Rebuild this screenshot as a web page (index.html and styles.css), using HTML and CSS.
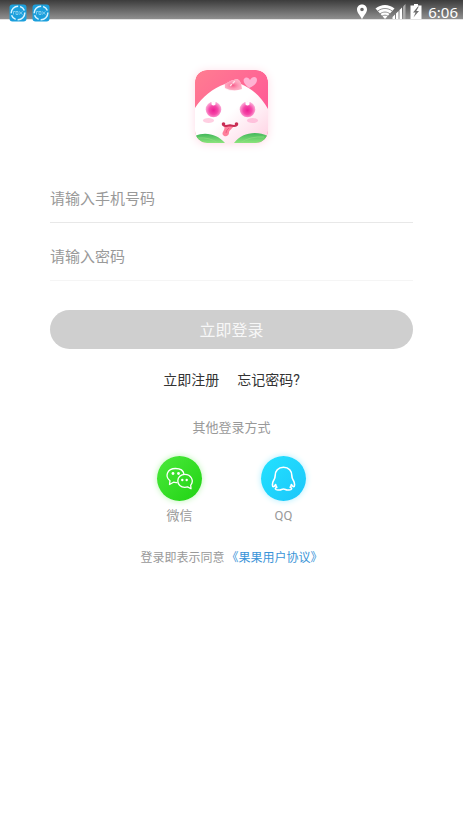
FILE: index.html
```html
<!DOCTYPE html>
<html lang="zh-CN">
<head>
    <meta charset="utf-8">
    <title>登录</title>
    <meta name="viewport" content="width=device-width, initial-scale=1">
    <link rel="stylesheet" href="styles.css">
</head>
<body>
    <div class="status-bar">
        <div class="status-left">
            <svg class="notice-icon" viewBox="0 0 18 18">
                <rect x="0.5" y="0.5" width="17" height="17" rx="3" fill="#1b9fdc"/>
                <circle cx="9" cy="9" r="6.8" fill="none" stroke="#d8f3ff" stroke-width="1.5" stroke-dasharray="11 2 6 2"/>
                <path d="M4.5 10.5v-3h2M7 7.500h2v3h-2zM10 7.500l3.500 3M13.500 7.500l-3.500 3" fill="none" stroke="#a5dcf5" stroke-width="0.700"/>
            </svg>
            <svg class="notice-icon" viewBox="0 0 18 18">
                <rect x="0.5" y="0.5" width="17" height="17" rx="3" fill="#1b9fdc"/>
                <circle cx="9" cy="9" r="6.8" fill="none" stroke="#d8f3ff" stroke-width="1.5" stroke-dasharray="11 2 6 2"/>
                <path d="M4.5 10.5v-3h2M7 7.500h2v3h-2zM10 7.500l3.500 3M13.500 7.500l-3.500 3" fill="none" stroke="#a5dcf5" stroke-width="0.700"/>
            </svg>
        </div>
        <div class="status-right">
            <!-- location, wifi, signal, battery -->
            <svg class="status-icons" viewBox="0 0 68 20">
                <path fill="#fff" fill-rule="evenodd" d="M7 4.500c-3 0-5 2.200-5 5 0 3.500 3.500 6 5 10 1.500-4 5-6.500 5-10 0-2.800-2-5-5-5zm0 3.200a1.800 1.800 0 1 1 0 3.600 1.800 1.800 0 0 1 0-3.600z"/>
                <path fill="#fff" d="M30 19L20.500 8.500c5.500-4.700 13.500-4.700 19 0z"/>
                <path fill="none" stroke="#777" stroke-width="0.800" d="M22.500 11.200c4.500-3.600 10.500-3.600 15 0M25 13.800c3-2.300 7-2.300 10 0M27 16.200c2-1.400 4-1.400 6 0"/>
                <path fill="#fff" d="M37.500 19v-2l2.500-2.500V19zM41 19v-5.500l2.500-2.500v8zM44.500 19v-9L47 7.500V19z"/>
                <path fill="#aaa" d="M48 19V6.500L50.500 4v15z"/>
                <path fill="#fff" fill-rule="evenodd" d="M59 4h4v1.500h3.500V19h-11V5.500H59zM63 6.500l-5 6h2.500l-2 5 5.500-6.500h-2.700l2.500-4.500z"/>
            </svg>
            <span class="clock">6:06</span>
        </div>
    </div>

    <div class="login">
        <svg class="logo" viewBox="0 0 73 73" role="img" aria-label="果果">
            <defs>
                <clipPath id="logoClip"><rect width="73" height="73" rx="12"/></clipPath>
                <linearGradient id="logoBg" x1="0" y1="0" x2="1" y2="1">
                    <stop offset="0" stop-color="#ff7d91"/>
                    <stop offset="1" stop-color="#ff4e98"/>
                </linearGradient>
                <linearGradient id="faceBg" x1="0" y1="0" x2="1" y2="1">
                    <stop offset="0.500" stop-color="#fff"/>
                    <stop offset="1" stop-color="#ffd0e2"/>
                </linearGradient>
                <radialGradient id="eyeBg" cx="0.500" cy="0.550" r="0.500">
                    <stop offset="0" stop-color="#ee1f94"/>
                    <stop offset="0.550" stop-color="#f548a8"/>
                    <stop offset="1" stop-color="#fba3d3"/>
                </radialGradient>
                <linearGradient id="leafBg" x1="0" y1="0" x2="0" y2="1">
                    <stop offset="0" stop-color="#43b85b"/>
                    <stop offset="1" stop-color="#8ce47c"/>
                </linearGradient>
                <radialGradient id="tipBg">
                    <stop offset="0" stop-color="#f65283" stop-opacity="0.900"/>
                    <stop offset="1" stop-color="#ff9fbc" stop-opacity="0"/>
                </radialGradient>
            </defs>
            <g clip-path="url(#logoClip)">
                <rect width="73" height="73" fill="url(#logoBg)"/>
                <path d="M0 38C7 27 18 18 30 14Q36 10 42 9Q45 10 46 14C58 19 67 28 73 39V73H0z" fill="url(#faceBg)"/>
                <path d="M30 14Q36 10 42 9Q45 10 46 14L47 19Q38 22 30 18z" fill="#ff8fae" opacity="0.700"/>
                <ellipse cx="38" cy="15.500" rx="10" ry="6" fill="url(#tipBg)"/>
                <path d="M35.500 15.500l1-1M38 13l1.500-1.500" stroke="#ffdfe9" stroke-width="1.300" stroke-linecap="round"/>
                <path d="M54 18C49 14 47 10 50 8c2-1 4 0 5 2 2-4 7-4 7 0 0 3-3 6-8 8z" fill="#ffb3d3"/>
                <circle cx="18.500" cy="39.500" r="7.800" fill="url(#eyeBg)"/>
                <circle cx="52.500" cy="39.500" r="7.800" fill="url(#eyeBg)"/>
                <path d="M16.500 31.500h4v3q-2 2-4 0zM50.500 31.500h4v3q-2 2-4 0z" fill="#fff"/>
                <ellipse cx="13.500" cy="50.500" rx="5.500" ry="2.500" fill="#ffcfe2"/>
                <ellipse cx="57.500" cy="50.500" rx="5.500" ry="2.500" fill="#ffc1dc"/>
                <path d="M29 56c2 4-3 6-1 9 2 2.500 6 1 6-2 0-3 2-3 5-7z" fill="#ff7e9b"/>
                <path d="M34 58q-3 2-3 5" fill="none" stroke="#e9577a" stroke-width="0.800"/>
                <path d="M28 54q0 2 3 2l4-.8 4 .8q3 0 3-2" fill="none" stroke="#c92d54" stroke-width="2"/>
                <circle cx="28.500" cy="54" r="1.800" fill="#c92d54"/>
                <circle cx="41.500" cy="54" r="1.800" fill="#c92d54"/>
                <path d="M0 66c11-5 23-1 30 7H0z" fill="url(#leafBg)"/>
                <path d="M39 73c7-10 22-13 34-7v7z" fill="url(#leafBg)"/>
                <path d="M3 68q12-1 20 5M45 73q10-7 24-6" fill="none" stroke="#8fdc83" stroke-width="0.700"/>
            </g>
        </svg>

        <form class="login-form">
            <input class="field" type="tel" placeholder="请输入手机号码" aria-label="手机号码">
            <input class="field field-password" type="password" placeholder="请输入密码" aria-label="密码">
            <button class="login-btn" type="submit">立即登录</button>
        </form>

        <div class="links">
            <a href="#">立即注册</a>
            <a href="#">忘记密码?</a>
        </div>

        <p class="other-title">其他登录方式</p>
        <div class="other-list">
            <button class="other-btn" type="button">
                <span class="circle wechat">
                    <svg viewBox="0 0 45 45" fill="none" stroke="#fff" stroke-width="1.300" stroke-linejoin="round">
                        <path d="M20.500 26.500q-2 .3-4-.3l-4 2.300.5-3.800C7.500 20.500 10 12.500 18.500 12.500c4.800 0 8 2.500 8.500 5.800"/>
                        <path d="M27.800 18.300c-4 0-7 2.800-7 6.500s3 6.500 7 6.500q1.500 0 2.800-.4l3.400 1.800-.3-3.500c3.700-4.500.2-10.900-5.900-10.900z"/>
                        <g fill="#fff" stroke="none">
                            <circle cx="16" cy="17.500" r="1.400"/>
                            <circle cx="21.500" cy="17.500" r="1.400"/>
                            <circle cx="25.300" cy="24" r="1.200"/>
                            <circle cx="29.700" cy="24" r="1.200"/>
                        </g>
                    </svg>
                </span>
                微信
            </button>
            <button class="other-btn" type="button">
                <span class="circle qq">
                    <svg viewBox="0 0 45 45" fill="none" stroke="#fff" stroke-width="1.600" stroke-linejoin="round" stroke-linecap="round">
                        <path d="M22.500 11.300c-5.500 0-8.300 4-8.300 8.200 0 2.500-.7 3.500-1.700 5.200-1.500 2.700-1.300 6-.2 6 1 0 1.500-.8 2.200-1.700M22.500 11.300c5.500 0 8.300 4 8.300 8.200 0 2.500.7 3.500 1.700 5.200 1.500 2.700 1.300 6 .2 6-1 0-1.500-.8-2.200-1.700"/>
                        <path d="M14.500 28.500q.3 1.700 1.300 2.800c-2.500 1-1.500 2.700 1 2.700h2c1.500 0 2-1 3.700-1s2.200 1 3.700 1h2c2.500 0 3.500-1.700 1-2.700q1-1.100 1.300-2.800"/>
                    </svg>
                </span>
                QQ
            </button>
        </div>

        <p class="agreement">登录即表示同意<a href="#">《果果用户协议》</a></p>
    </div>
</body>
</html>
```
FILE: styles.css
```css
body {
    margin: 0;
    background: #fff;
    font-family: Roboto, "Noto Sans CJK SC", sans-serif;
    color: #999;
}
a {
    text-decoration: none;
}
.status-bar {
    display: flex;
    justify-content: space-between;
    height: 19px;
    padding: 0 5px 0 9px;
    background: linear-gradient(#3c3c3c, #8f8f8f);
    border-bottom: 1px solid #e4e4e4;
}
.status-left {
    display: flex;
    gap: 5px;
    padding-top: 4px;
}
.notice-icon {
    width: 18px;
    height: 18px;
}
.status-right {
    display: flex;
    gap: 5px;
}
.status-icons {
    width: 68px;
    height: 20px;
}
.clock {
    font-family: "Noto Sans", sans-serif;
    font-size: 15px;
    line-height: 25px;
    color: #fff;
}
.login {
    display: flex;
    flex-direction: column;
    align-items: center;
    padding: 50px 50px 0;
}
.logo {
    width: 73px;
    height: 73px;
    border-radius: 12px;
    box-shadow: 0 1px 10px #ffdbe6;
}
.login-form {
    display: flex;
    flex-direction: column;
    width: 100%;
    margin-top: 31px;
}
.field {
    height: 49px;
    box-sizing: border-box;
    padding: 1px 0 0;
    border: 0;
    border-bottom: 1px solid #e8e8e8;
    background: none;
    font-family: inherit;
    font-size: 15px;
    color: #333;
    outline: none;
}
.field::placeholder {
    color: #999;
}
.field-password {
    margin-top: 9px;
    border-bottom-color: #f5f5f5;
}
.login-btn {
    height: 39px;
    margin-top: 29px;
    padding: 0 0 2px;
    border: 0;
    border-radius: 20px;
    background: #cfcfcf;
    font-family: inherit;
    font-size: 16px;
    color: #f7f7f7;
}
.links {
    display: flex;
    gap: 18px;
    margin-top: 21px;
    line-height: 21px;
    font-size: 14px;
}
.links a {
    color: #333;
}
.other-title {
    margin: 27px 0 0;
    font-size: 13px;
    line-height: 20px;
}
.other-list {
    display: flex;
    gap: 59px;
    margin-top: 18px;
}
.other-btn {
    display: flex;
    flex-direction: column;
    align-items: center;
    gap: 5px;
    padding: 0;
    border: 0;
    background: none;
    font-family: inherit;
    font-size: 13px;
    line-height: 20px;
    color: #999;
}
.circle {
    width: 45px;
    height: 45px;
    border-radius: 50%;
}
.circle svg {
    display: block;
}
.wechat {
    background: linear-gradient(135deg, #4be93b, #20d313);
    box-shadow: 0 0 6px #b9f5b2;
}
.qq {
    background: linear-gradient(135deg, #22e2ff, #1cc6fa);
    box-shadow: 0 0 6px #adeeff;
}
.agreement {
    margin: 22px 0 0;
    font-size: 12px;
    line-height: 20px;
}
.agreement a {
    margin-left: 2px;
    color: #3a94d8;
}
```
